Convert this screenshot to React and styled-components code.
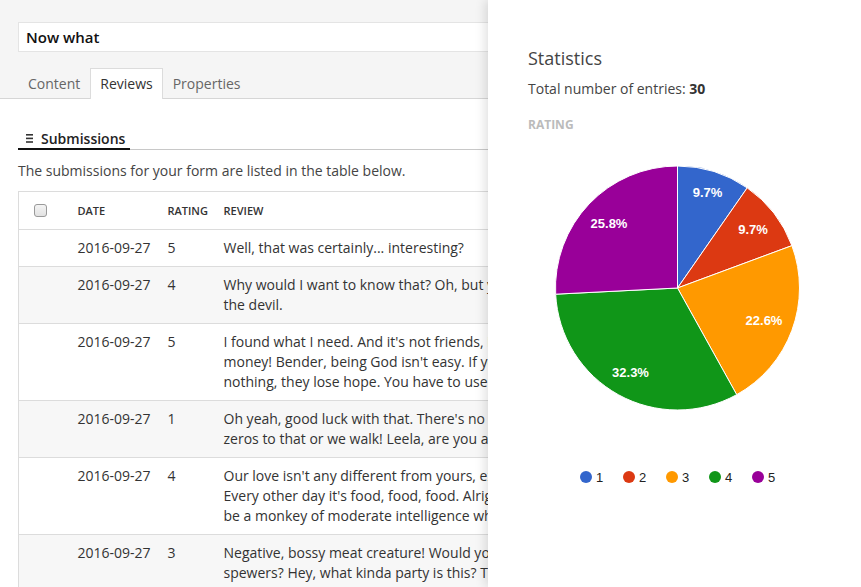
import React from "react";
import styled, {createGlobalStyle} from "styled-components";

const GlobalStyle = createGlobalStyle`
  html, body {
    margin: 0;
    padding: 0;
    background: #fff;
  }
  body {
    font-family: "Open Sans", "Liberation Sans", sans-serif;
    color: #333;
  }
`

const reviews = [
  {date: "2016-09-27", rating: 5, lines: ["Well, that was certainly... interesting?"]},
  {date: "2016-09-27", rating: 4, lines: [
    "Why would I want to know that? Oh, but you're not, are you? You're not at all like",
    "the devil.",
  ]},
  {date: "2016-09-27", rating: 5, lines: [
    "I found what I need. And it's not friends, it's things. Give me all your",
    "money! Bender, being God isn't easy. If you do too much, people get dependent on you, and if you do",
    "nothing, they lose hope. You have to use a light touch.",
  ]},
  {date: "2016-09-27", rating: 1, lines: [
    "Oh yeah, good luck with that. There's no such thing as a free lunch. Add two",
    "zeros to that or we walk! Leela, are you alright? You got wanged on the head.",
  ]},
  {date: "2016-09-27", rating: 4, lines: [
    "Our love isn't any different from yours, except it's hotter, because I'm involved.",
    "Every other day it's food, food, food. Alright, I'll go, but only if you promise to",
    "be a monkey of moderate intelligence who wears a suit.",
  ]},
  {date: "2016-09-27", rating: 3, lines: [
    "Negative, bossy meat creature! Would you like to see our new line of fire",
    "spewers? Hey, what kinda party is this? There's no booze and only one hooker.",
    "Stop! Don't shoot fire stick in space canoe!",
  ]},
]

const slices = [
  {label: "1", value: 3, color: "#3366cc", text: "9.7%", lx: 707.5, ly: 192},
  {label: "2", value: 3, color: "#dc3912", text: "9.7%", lx: 753, ly: 229},
  {label: "3", value: 7, color: "#ff9900", text: "22.6%", lx: 764, ly: 320},
  {label: "4", value: 10, color: "#109618", text: "32.3%", lx: 630.5, ly: 372},
  {label: "5", value: 8, color: "#990099", text: "25.8%", lx: 609, ly: 223},
]

// chart svg sits at page x=528, y=140
const OX = 528
const OY = 140
const CX = 149.5
const CY = 148
const R = 122

const point = (frac) => {
  const a = frac * Math.PI * 2
  return [CX + R * Math.sin(a), CY - R * Math.cos(a)]
}

const PieChart = () => {
  const total = slices.reduce((s, x) => s + x.value, 0)
  let acc = 0
  return (
    <ChartSvg width="300" height="360" viewBox="0 0 300 360">
      {slices.map((s) => {
        const start = acc / total
        acc += s.value
        const end = acc / total
        const [x1, y1] = point(start)
        const [x2, y2] = point(end)
        const large = end - start > 0.5 ? 1 : 0
        return (
          <path
            key={s.label}
            d={`M${CX} ${CY} L${x1} ${y1} A${R} ${R} 0 ${large} 1 ${x2} ${y2} Z`}
            fill={s.color}
            stroke="#fff"
            strokeWidth="1"
          />
        )
      })}
      {slices.map((s) => (
        <text
          key={"t" + s.label}
          x={s.lx - OX}
          y={s.ly - OY + 4.5}
          textAnchor="middle"
          fill="#fff"
          fontFamily="'Liberation Sans', Arial, sans-serif"
          fontSize="13"
          fontWeight="bold"
        >
          {s.text}
        </text>
      ))}
      {slices.map((s, i) => {
        const cx = 586 - OX + i * 43
        return (
          <g key={"l" + s.label}>
            <circle cx={cx} cy={337} r="6" fill={s.color}/>
            <text
              x={cx + 10}
              y={337 + 5}
              fill="#222"
              fontFamily="'Liberation Sans', Arial, sans-serif"
              fontSize="13"
            >
              {s.label}
            </text>
          </g>
        )
      })}
    </ChartSvg>
  )
}

const ListIcon = () => (
  <svg width="8" height="9" viewBox="0 0 8 9">
    <rect x="0" y="0" width="7" height="1.6" fill="#333"/>
    <rect x="0" y="3.6" width="7" height="1.6" fill="#333"/>
    <rect x="0" y="7.2" width="7" height="1.6" fill="#333"/>
  </svg>
)

const App = () => {
  return (
    <>
      <GlobalStyle/>
      <Screen>
        <Header>
          <TitleInput>Now what</TitleInput>
          <Tabs>
            <Tab>Content</Tab>
            <Tab active>Reviews</Tab>
            <Tab>Properties</Tab>
          </Tabs>
        </Header>

        <Body>
          <SubHeader>
            <SubTab><ListIcon/>Submissions</SubTab>
          </SubHeader>
          <Intro>The submissions for your form are listed in the table below.</Intro>

          <Table>
            <colgroup>
              <col style={{width: 44}}/>
              <col style={{width: 90}}/>
              <col style={{width: 56}}/>
              <col/>
            </colgroup>
            <thead>
              <tr>
                <HeadCell><Checkbox/></HeadCell>
                <HeadCell>Date</HeadCell>
                <HeadCell>Rating</HeadCell>
                <HeadCell>Review</HeadCell>
              </tr>
            </thead>
            <tbody>
              {reviews.map((r, i) => (
                <Row key={i} $striped={i % 2 === 1}>
                  <Cell/>
                  <Cell>{r.date}</Cell>
                  <Cell>{r.rating}</Cell>
                  <Cell>
                    {r.lines.map((l, j) => <Line key={j}>{l}</Line>)}
                  </Cell>
                </Row>
              ))}
            </tbody>
          </Table>
        </Body>

        <StatsPanel>
          <StatsTitle>Statistics</StatsTitle>
          <StatsTotal>Total number of entries: <b>30</b></StatsTotal>
          <StatsLabel>Rating</StatsLabel>
          <PieChart/>
        </StatsPanel>
      </Screen>
    </>
  )
}

const Screen = styled.div`
  position: relative;
  width: 861px;
  height: 587px;
  overflow: hidden;
  background: #fff;
`

const Header = styled.div`
  background: #f5f5f5;
  padding: 22px 18px 0;
  border-bottom: 1px solid #d6d6d6;
`

const TitleInput = styled.div`
  height: 28px;
  line-height: 28px;
  border: 1px solid #e4e4e4;
  background: #fff;
  padding: 0 7px;
  font-size: 15px;
  font-weight: 600;
  color: #111;
`

const Tabs = styled.div`
  display: flex;
  margin-top: 16px;
`

const Tab = styled.div`
  height: 29px;
  line-height: 30px;
  padding: 0 9px;
  font-size: 14px;
  color: ${props => props.active ? "#333" : "#666"};
  background: ${props => props.active ? "#fff" : "transparent"};
  border: 1px solid ${props => props.active ? "#dcdcdc" : "transparent"};
  border-bottom: none;
  margin-bottom: -1px;
  ${props => props.active && "height: 30px;"}
`

const Body = styled.div`
  padding: 0 18px;
`

const SubHeader = styled.div`
  display: flex;
  margin-top: 29px;
  border-bottom: 1px solid #c8c8c8;
`

const SubTab = styled.div`
  display: flex;
  align-items: center;
  gap: 7px;
  padding: 0 5px 0 8px;
  height: 20px;
  font-size: 14px;
  font-weight: 600;
  color: #222;
  border-bottom: 2px solid #111;
  margin-bottom: -1px;
`

const Intro = styled.p`
  margin: 11px 0 10px;
  font-size: 14px;
  line-height: 20px;
  color: #444;
`

const Table = styled.table`
  width: 100%;
  table-layout: fixed;
  border-collapse: collapse;
  border-top: 1px solid #dcdcdc;
  border-left: 1px solid #dcdcdc;
  font-size: 14px;
  color: #333;
`

const HeadCell = styled.th`
  height: 37px;
  padding: 0 0 0 15px;
  text-align: left;
  vertical-align: middle;
  font-size: 11px;
  font-weight: 600;
  text-transform: uppercase;
  color: #333;
  border-bottom: 1px solid #dcdcdc;
`

const Checkbox = styled.span`
  display: block;
  width: 11px;
  height: 11px;
  border: 1px solid #9a9a9a;
  border-radius: 3px;
  background: linear-gradient(#f4f4f4, #e2e2e2);
`

const Row = styled.tr`
  background: ${props => props.$striped ? "#f7f7f7" : "#fff"};
  border-bottom: 1px solid #dcdcdc;
`

const Cell = styled.td`
  padding: 8px 0 8px 15px;
  line-height: 20px;
  vertical-align: top;
  white-space: nowrap;
  overflow: hidden;
`

const Line = styled.span`
  display: block;
  white-space: nowrap;
`

const StatsPanel = styled.div`
  position: absolute;
  top: 0;
  right: 0;
  bottom: 0;
  width: 333px;
  padding: 46px 0 0 40px;
  background: #fff;
  box-shadow: -3px 0 10px rgba(0, 0, 0, 0.12);
`

const StatsTitle = styled.h2`
  margin: 0;
  font-size: 18px;
  line-height: 24px;
  font-weight: 400;
  color: #444;
`

const StatsTotal = styled.div`
  margin-top: 9px;
  font-size: 14px;
  line-height: 20px;
  color: #444;

  b {
    font-weight: 700;
    color: #333;
  }
`

const StatsLabel = styled.div`
  margin-top: 18px;
  font-size: 12px;
  line-height: 16px;
  font-weight: 700;
  text-transform: uppercase;
  color: #bbb;
`

const ChartSvg = styled.svg`
  display: block;
  margin-top: 7px;
  overflow: visible;
`

export default App
